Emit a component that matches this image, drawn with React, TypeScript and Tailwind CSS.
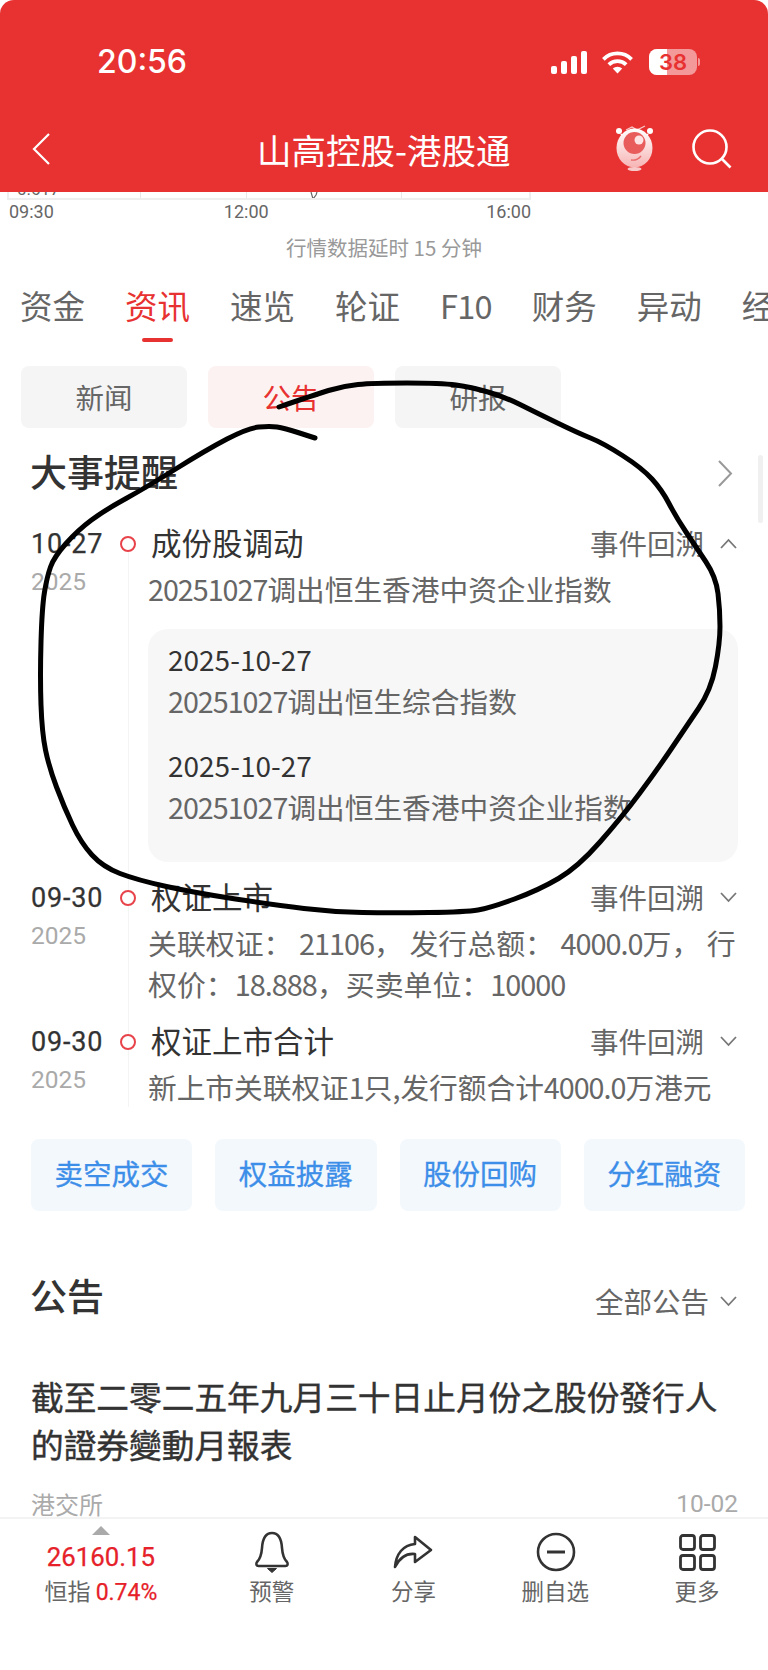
const sans = "[font-family:'Noto_Sans_CJK_SC',sans-serif]"
const num = "[font-family:'Roboto','Noto_Sans_CJK_SC',sans-serif]"

const TABS = ['资金', '资讯', '速览', '轮证', 'F10', '财务', '异动', '经营']
const LINKS = ['卖空成交', '权益披露', '股份回购', '分红融资']

// hand drawn circle on top of the screenshot
const SCRIBBLE: [number, number][] = [
  [279, 407], [314, 395], [343, 386], [373, 383], [441, 383], [471, 387], [505, 397], [537, 413],
  [578, 433], [603, 443], [642, 468], [662, 490], [676, 517], [696, 547], [716, 577], [720, 610],
  [720, 643], [711, 690], [686, 727], [657, 770], [622, 817], [578, 867], [539, 890], [490, 908],
  [466, 912], [392, 913], [333, 912], [275, 905], [196, 893], [137, 880], [103, 867], [81, 843],
  [64, 807], [49, 767], [42, 733], [40, 677], [42, 607], [47, 577], [54, 557], [78, 530],
  [105, 510], [147, 487], [206, 450], [248, 428], [270, 426], [284, 428], [315, 438],
]

const smooth = (pts: [number, number][]) => {
  let d = `M${pts[0][0]} ${pts[0][1]}`
  for (let i = 1; i < pts.length - 1; i++) {
    const mx = (pts[i][0] + pts[i + 1][0]) / 2
    const my = (pts[i][1] + pts[i + 1][1]) / 2
    d += ` Q${pts[i][0]} ${pts[i][1]} ${mx} ${my}`
  }
  const last = pts[pts.length - 1]
  return d + ` L${last[0]} ${last[1]}`
}

// digits in the app's font run narrower than the CJK text around them
const Txt = ({ children }: { children: string }) => (
  <>
    {children.split(/([\d.]+)/).map((part, i) =>
      i % 2 ? (
        <span key={i} className="tracking-[-1px]">
          {part}
        </span>
      ) : (
        part
      ),
    )}
  </>
)

const Chevron = ({ up }: { up?: boolean }) => (
  <svg width="17" height="11" viewBox="0 0 17 11" fill="none" stroke="#777" strokeWidth="1.8">
    <polyline points={up ? '1,10 8.5,2 16,10' : '1,1 8.5,9 16,1'} />
  </svg>
)

const Mascot = () => (
  <svg width="42" height="48" viewBox="0 0 42 48" className="mr-[36px] -mt-[2px]">
    <defs>
      <linearGradient id="head" x1="0" y1="0" x2="0" y2="1">
        <stop offset="0" stopColor="#ffffff" />
        <stop offset="1" stopColor="#f7b4b4" />
      </linearGradient>
    </defs>
    <circle cx="5" cy="7" r="3" fill="#fff" />
    <circle cx="36" cy="7" r="3" fill="#fff" />
    <polyline points="12,6 18,3 23,6 31,2" fill="none" stroke="#f8c9c9" strokeWidth="1.2" />
    <path d="M7 10 L11 15 M34 10 L30 15" stroke="#fff" strokeWidth="1.6" />
    <ellipse cx="20.5" cy="24" rx="18" ry="19.5" fill="url(#head)" />
    <circle cx="20.5" cy="19" r="11" fill="#e85c5c" />
    <circle cx="25" cy="16" r="4.5" fill="#fde3e3" />
    <path d="M17 36 Q23 37 27 32" fill="none" stroke="#e86a6a" strokeWidth="1.4" />
    <ellipse cx="20.5" cy="45" rx="7" ry="2" fill="#f8c9c9" />
  </svg>
)

const StatusBar = () => (
  <div className="flex h-[26px] items-center pl-[97px] pr-[68px] justify-between text-white">
    <span className="text-[32px] leading-[26px] font-medium [font-family:'Inter',sans-serif]">20:56</span>
    <div className="flex items-center">
      <div className="flex items-end gap-[4px] h-[23px]">
        <div className="w-[6px] h-[8px] rounded-[2px] bg-white" />
        <div className="w-[6px] h-[13px] rounded-[2px] bg-white" />
        <div className="w-[6px] h-[18px] rounded-[2px] bg-white" />
        <div className="w-[6px] h-[23px] rounded-[2px] bg-white" />
      </div>
      <svg width="33" height="23" viewBox="0 0 31 22" fill="none" stroke="#fff" className="ml-[14px]">
        <path d="M2 8 A19 19 0 0 1 29 8" strokeWidth="3.6" />
        <path d="M7.2 13 A12 12 0 0 1 23.8 13" strokeWidth="3.6" />
        <path d="M11 16.8 A6.5 6.5 0 0 1 20 16.8 L15.5 21.5 Z" fill="#fff" stroke="none" />
      </svg>
      <div className="relative ml-[15px] w-[48px] h-[26px] rounded-[8px] bg-white/50 flex items-center justify-center">
        <div className="absolute left-0 top-0 bottom-0 w-[38%] rounded-l-[8px] bg-white" />
        <span className="relative text-[22px] leading-[26px] font-semibold text-[#e83232] [font-family:'Inter',sans-serif]">38</span>
      </div>
      <div className="ml-[1px] w-[2px] h-[8px] rounded-r-[2px] bg-white/50" />
    </div>
  </div>
)

const Header = () => (
  <div className="h-[192px] bg-[#e83232] rounded-t-[14px] pt-[49px] shrink-0">
    <StatusBar />
    <div className="relative flex items-center h-[50px] mt-[49px] pl-[32px] pr-[36px] justify-between">
      <svg width="18" height="32" viewBox="0 0 18 32" fill="none" stroke="#fff" strokeWidth="2.2">
        <polyline points="17,1 2,16 17,31" />
      </svg>
      <span className={`absolute left-[257px] top-0 text-[34.5px] leading-[50px] text-white whitespace-nowrap ${sans}`}>山高控股-港股通</span>
      <div className="flex items-center">
        <Mascot />
        <svg width="40" height="40" viewBox="0 0 40 40" fill="none" stroke="#fff" strokeWidth="2.6">
          <circle cx="18" cy="18" r="16.5" />
          <path d="M29 29 L38.5 38.5" />
        </svg>
      </div>
    </div>
  </div>
)

const ChartStub = () => (
  <div className="shrink-0">
    <div className="relative ml-[7px] w-[524px] h-[8px] border-x-2 border-b-2 border-[#eeeeee] overflow-hidden box-border">
      <div className={`ml-[8px] -mt-[11px] text-[17px] leading-[16px] text-[#666] ${num}`}>0.617</div>
      <div className="absolute left-[131px] top-0 bottom-0 w-[1px] bg-[#e8e8e8]" />
      <div className="absolute left-[237px] top-0 bottom-0 w-[1px] bg-[#e8e8e8]" />
      <div className="absolute left-[392px] top-0 bottom-0 w-[1px] bg-[#e8e8e8]" />
      <svg width="12" height="8" viewBox="0 0 12 8" fill="none" stroke="#666" strokeWidth="1.2" className="absolute left-[300px] top-0">
        <polyline points="2,0 4,7 7,3 8,0" />
      </svg>
    </div>
    <div className={`flex w-[522px] ml-[9px] text-[18px] leading-[24px] text-[#666] ${num}`}>
      <span>09:30</span>
      <span className="ml-[170px]">12:00</span>
      <span className="ml-auto">16:00</span>
    </div>
    <div className={`mt-[8px] h-[30px] text-center text-[20.5px] leading-[30px] text-[#999] ${sans}`}>行情数据延时 15 分钟</div>
  </div>
)

const TabBar = () => (
  <div className={`mt-[23px] flex gap-[40px] pl-[20px] overflow-hidden shrink-0 ${sans}`}>
    {TABS.map((t, i) => (
      <div key={t} className="flex flex-col items-center shrink-0">
        <span className={`text-[32.5px] leading-[40px] ${i === 1 ? 'text-[#e83232]' : 'text-[#666]'} ${t === 'F10' ? 'tracking-[-0.8px]' : ''}`}>{t}</span>
        <div className={`mt-[13px] w-[31px] h-[4px] rounded-full ${i === 1 ? 'bg-[#e83232]' : 'bg-transparent'}`} />
      </div>
    ))}
  </div>
)

const Chips = () => (
  <div className={`mt-[24px] flex gap-[21px] pl-[21px] shrink-0 text-[28.5px] ${sans}`}>
    <div className="w-[166px] h-[62px] rounded-[8px] bg-[#f5f5f5] text-[#666] flex items-center justify-center">新闻</div>
    <div className="w-[166px] h-[62px] rounded-[8px] bg-[#fdf2f2] text-[#e83232] flex items-center justify-center">公告</div>
    <div className="w-[166px] h-[62px] rounded-[8px] bg-[#f5f5f5] text-[#666] flex items-center justify-center">研报</div>
  </div>
)

type RowProps = {
  date: string
  title: string
  open?: boolean
  first?: boolean
  pb: string
  children: React.ReactNode
}

const Row = ({ date, title, open, first, pb, children }: RowProps) => (
  <div className="flex pl-[31px] pr-[30px]">
    <div className="w-[89px] shrink-0">
      <div className={`text-[27px] leading-[40px] tracking-[0.8px] text-[#333] [-webkit-text-stroke:0.25px_#333] ${num}`}>{date}</div>
      <div className={`text-[24.5px] leading-[36px] text-[#aaa] ${num}`}>2025</div>
    </div>
    <div className="w-[16px] shrink-0 flex flex-col items-center">
      <div className={`w-[1px] h-[12px] ${first ? 'bg-transparent' : 'bg-[#f4f4f4]'}`} />
      <div className="w-[16px] h-[16px] rounded-full border-[2.5px] border-[#e8434a] shrink-0" />
      <div className="w-[1px] flex-1 bg-[#f4f4f4]" />
    </div>
    <div className={`ml-[12px] flex-1 min-w-0 ${pb}`}>
      <div className="flex items-center justify-between h-[40px] pl-[3px] pb-[2px]">
        <span className="text-[30.5px] text-[#333]">{title}</span>
        <div className="flex items-center gap-[16px] pr-[1px]">
          <span className="text-[28.5px] text-[#666]">事件回溯</span>
          <Chevron up={open} />
        </div>
      </div>
      {children}
    </div>
  </div>
)

const Timeline = () => (
  <div className={`mt-[26px] shrink-0 ${sans}`}>
    <Row date="10-27" title="成份股调动" open first pb="pb-[16px]">
      <p className="mt-[4px] text-[28.7px] leading-[41px] text-[#666]"><Txt>20251027调出恒生香港中资企业指数</Txt></p>
      <div className="mt-[20px] h-[233px] rounded-[20px] bg-[#f7f7f7] pt-[10px] px-[20px] text-[28.7px] leading-[41px]">
        <p className="text-[28px] text-[#333]">2025-10-27</p>
        <p className="text-[#666]"><Txt>20251027调出恒生综合指数</Txt></p>
        <p className="mt-[24px] text-[28px] text-[#333]">2025-10-27</p>
        <p className="text-[#666]"><Txt>20251027调出恒生香港中资企业指数</Txt></p>
      </div>
    </Row>
    <Row date="09-30" title="权证上市" pb="pb-[18px]">
      <div className="mt-[4px] text-[28.9px] leading-[41px] text-[#666] whitespace-nowrap">
        <p><Txt>关联权证： 21106， 发行总额： 4000.0万， 行</Txt></p>
        <p><Txt>权价：18.888，买卖单位：10000</Txt></p>
      </div>
    </Row>
    <Row date="09-30" title="权证上市合计" pb="pb-0">
      <p className="mt-[4px] text-[28.7px] leading-[41px] text-[#666] whitespace-nowrap"><Txt>新上市关联权证1只,发行额合计4000.0万港元</Txt></p>
    </Row>
  </div>
)

const Links = () => (
  <div className={`mt-[32px] ml-[31px] w-[714px] grid grid-cols-4 gap-[23px] shrink-0 ${sans}`}>
    {LINKS.map((l) => (
      <div key={l} className="h-[72px] pb-[3px] rounded-[8px] bg-[#f3f8fd] text-[#3d8ee8] text-[28.5px] [-webkit-text-stroke:0.3px_#3d8ee8] flex items-center justify-center">
        {l}
      </div>
    ))}
  </div>
)

const Notices = () => (
  <div className={`shrink-0 pl-[31px] pr-[30px] ${sans}`}>
    <div className="mt-[57px] flex items-center justify-between">
      <h2 className="-ml-[1px] text-[37px] leading-[50px] font-medium text-[#333]">公告</h2>
      <div className="flex items-center gap-[11px] pt-[13px] pr-[1px]">
        <span className="text-[28.5px] leading-[40px] text-[#666]">全部公告</span>
        <Chevron />
      </div>
    </div>
    <h3 className="mt-[51px] w-[700px] text-[32.7px] leading-[48px] font-normal text-[#333] [-webkit-text-stroke:0.4px_#333]">
      截至二零二五年九月三十日止月份之股份發行人的證券變動月報表
    </h3>
    <div className="mt-[19px] flex justify-between items-center text-[24px] leading-[34px] text-[#aaa]">
      <span>港交所</span>
      <span className={`${num} text-[24.5px]`}>10-02</span>
    </div>
  </div>
)

const Bell = () => (
  <svg width="36" height="42" viewBox="0 0 36 42" fill="none" stroke="#333" strokeWidth="2.6" strokeLinejoin="round">
    <path d="M18 2 C25 2 27.5 9 28 17 C28.5 24 30 28 33 31 C34.5 33 33.5 35 31.5 35 L4.5 35 C2.5 35 1.5 33 3 31 C6 28 7.5 24 8 17 C8.5 9 11 2 18 2 Z" />
    <path d="M13.5 37.5 L22.5 37.5 L18 41.5 Z" fill="#333" strokeWidth="1" />
  </svg>
)

const Share = () => (
  <svg width="40" height="34" viewBox="0 0 40 34" fill="none" stroke="#333" strokeWidth="2.6" strokeLinejoin="round">
    <path d="M22 2 L38 15 L22 27 L22 19 C13 18 7 22 2 32 C3 19 10 10 22 9 Z" />
  </svg>
)

const Remove = () => (
  <svg width="40" height="40" viewBox="0 0 40 40" fill="none" stroke="#333" strokeWidth="2.6" className="ml-[2px]">
    <circle cx="20" cy="20" r="18" />
    <path d="M11 20 L29 20" strokeWidth="3" />
  </svg>
)

const Grid = () => (
  <svg width="37" height="37" viewBox="0 0 37 37" fill="none" stroke="#333" strokeWidth="2.8">
    <rect x="1.5" y="1.5" width="14" height="14" rx="2.5" />
    <rect x="21.5" y="1.5" width="14" height="14" rx="2.5" />
    <rect x="1.5" y="21.5" width="14" height="14" rx="2.5" />
    <rect x="21.5" y="21.5" width="14" height="14" rx="2.5" />
  </svg>
)

const BarAction = ({ icon, label }: { icon: React.ReactNode; label: string }) => (
  <div className="w-[142px] flex flex-col items-center pt-[11px]">
    <div className="h-[44px] flex items-center justify-center">{icon}</div>
    <span className="mt-[1px] text-[22.5px] leading-[30px] text-[#666]">{label}</span>
  </div>
)

const BottomBar = () => (
  <div className={`absolute left-0 right-0 bottom-0 h-[153px] bg-white border-t-2 border-[#f3f3f3] flex ${sans}`}>
    <div className="w-[201px] pl-[30px] pr-[29px] flex flex-col items-center pt-[7px]">
      <div className="w-0 h-0 border-x-[9px] border-x-transparent border-b-[9px] border-b-[#aaa]" />
      <div className={`mt-[7px] text-[25.8px] leading-[30px] text-[#e6212a] [-webkit-text-stroke:0.25px_#e6212a] ${num}`}>26160.15</div>
      <div className="mt-[3px] text-[23px] leading-[30px] text-[#666] whitespace-nowrap">
        恒指 <span className={`${num} text-[#e6212a] [-webkit-text-stroke:0.25px_#e6212a]`}>0.74%</span>
      </div>
    </div>
    <BarAction icon={<Bell />} label="预警" />
    <BarAction icon={<Share />} label="分享" />
    <BarAction icon={<Remove />} label="删自选" />
    <BarAction icon={<Grid />} label="更多" />
  </div>
)

export default function App() {
  return (
    <div className="relative w-[768px] h-[1670px] bg-white overflow-hidden flex flex-col">
      <Header />
      <ChartStub />
      <TabBar />
      <Chips />
      <div className={`mt-[20px] flex items-center justify-between h-[50px] pl-[30px] pr-[35px] shrink-0 ${sans}`}>
        <h2 className="text-[37px] leading-[46px] pb-[4px] font-medium text-[#333]">大事提醒</h2>
        <svg width="16" height="27" viewBox="0 0 16 27" fill="none" stroke="#999" strokeWidth="2">
          <polyline points="2,1 14,13.5 2,26" />
        </svg>
      </div>
      <Timeline />
      <Links />
      <Notices />
      <BottomBar />
      {/* scrollbar */}
      <div className="absolute left-[758px] top-[455px] w-[5px] h-[68px] rounded-full bg-[#f0f0f0]" />
      <svg width="768" height="1670" viewBox="0 0 768 1670" fill="none" className="absolute left-0 top-0 pointer-events-none">
        <path d={smooth(SCRIBBLE)} stroke="#000" strokeWidth="5" strokeLinecap="round" strokeLinejoin="round" />
      </svg>
    </div>
  )
}
